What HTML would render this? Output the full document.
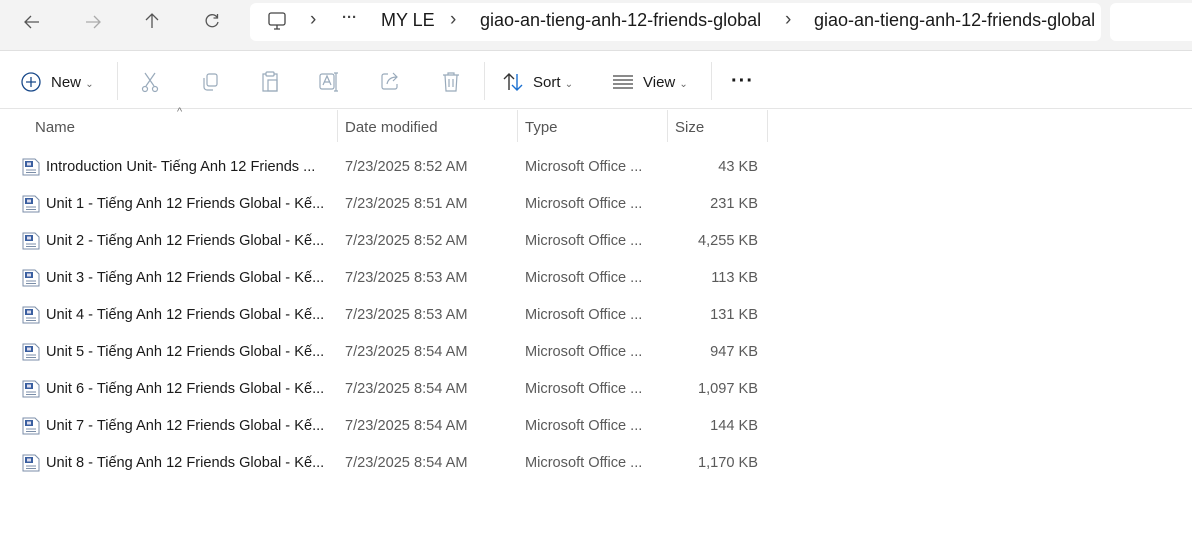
<!DOCTYPE html>
<html><head><meta charset="utf-8"><style>
*{margin:0;padding:0;box-sizing:border-box}
body{width:1192px;height:537px;background:#fff;font-family:"Liberation Sans",sans-serif;color:#1a1a1a;position:relative;overflow:hidden;font-size:15px}
.abs{position:absolute;white-space:nowrap}
.top{position:absolute;left:0;top:0;width:1192px;height:51px;background:#f3f3f3;border-bottom:1px solid #e0e0e0}
.addr{position:absolute;left:250px;top:3px;width:851px;height:38px;background:#fff;border-radius:6px}
.srch{position:absolute;left:1110px;top:3px;width:90px;height:38px;background:#fff;border-radius:6px}
.tb{position:absolute;left:0;top:108px;width:1192px;height:1px;background:#e5e5e5}
.sep{position:absolute;width:1px;background:#e5e5e5;top:62px;height:38px}
.hd{color:#555;font-size:15px}
.colsep{position:absolute;top:110px;width:1px;height:32px;background:#e5e5e5}
.row{font-size:14.6px}
.g{color:#5a5a5a}
.chev{color:#444;font-size:19px}
</style></head><body>
<div class="top"></div>
<div class="addr"></div><div class="srch"></div>
<svg class="abs" style="left:22px;top:12px" width="20" height="20" viewBox="0 0 20 20" fill="none" stroke="#555" stroke-width="1.3"><path d="M17 10H3M9 4L3 10l6 6"/></svg>
<svg class="abs" style="left:83px;top:12px" width="20" height="20" viewBox="0 0 20 20" fill="none" stroke="#aaa" stroke-width="1.3"><path d="M3 10h14M11 4l6 6-6 6"/></svg>
<svg class="abs" style="left:142px;top:11px" width="20" height="20" viewBox="0 0 20 20" fill="none" stroke="#555" stroke-width="1.3"><path d="M10 17V3M4 9l6-6 6 6"/></svg>
<svg class="abs" style="left:202px;top:11px" width="20" height="20" viewBox="0 0 20 20" fill="none" stroke="#555" stroke-width="1.3"><path d="M15.5 7A6 6 0 1 0 16 11M15.5 3v4h-4"/></svg>
<svg class="abs" style="left:266px;top:10px" width="22" height="22" viewBox="0 0 22 22" fill="none" stroke="#444" stroke-width="1.3"><rect x="3" y="3" width="16" height="12" rx="2"/><path d="M8 19h6M11 15v4"/></svg>
<div class="abs chev" style="left:310px;top:9px">›</div>
<div class="abs" style="left:342px;top:9px;color:#444;font-weight:bold">···</div>
<div class="abs" style="left:381px;top:10px;font-size:18px">MY LE</div>
<div class="abs chev" style="left:450px;top:9px">›</div>
<div class="abs" style="left:480px;top:10px;font-size:18px">giao-an-tieng-anh-12-friends-global</div>
<div class="abs chev" style="left:785px;top:9px">›</div>
<div class="abs" style="left:814px;top:10px;font-size:18px">giao-an-tieng-anh-12-friends-global</div>

<svg class="abs" style="left:20px;top:71px" width="22" height="22" viewBox="0 0 22 22" fill="none" stroke="#1a4a8a" stroke-width="1.3"><circle cx="11" cy="11" r="9"/><path d="M11 6v10M6 11h10"/></svg>
<div class="abs" style="left:51px;top:74px">New <span style="font-size:10px;color:#666">⌄</span></div>
<div class="sep" style="left:117px"></div>
<svg class="abs" style="left:140px;top:71px" width="20" height="22" viewBox="0 0 20 22" fill="none" stroke="#9ab" stroke-width="1.2"><path d="M5 2l9 13M15 2L6 15"/><circle cx="5" cy="18" r="2.5"/><circle cx="15" cy="18" r="2.5"/></svg>
<svg class="abs" style="left:199px;top:71px" width="22" height="22" viewBox="0 0 22 22" fill="none" stroke="#9ab" stroke-width="1.2"><rect x="8" y="3" width="10" height="12" rx="2"/><path d="M5 7v9a3 3 0 0 0 3 3h6"/></svg>
<svg class="abs" style="left:259px;top:70px" width="22" height="24" viewBox="0 0 22 24" fill="none" stroke="#9ab" stroke-width="1.2"><path d="M7 4H4v17h14V4h-3"/><rect x="7" y="2" width="8" height="4" rx="1"/><rect x="9" y="10" width="9" height="11"/></svg>
<svg class="abs" style="left:318px;top:70px" width="24" height="24" viewBox="0 0 24 24" fill="none" stroke="#9ab" stroke-width="1.2"><rect x="2" y="4" width="14" height="15" rx="2"/><path d="M5 15l4-9 4 9M6.5 12h5M18 3v18M16 3h4M16 21h4"/></svg>
<svg class="abs" style="left:379px;top:70px" width="22" height="22" viewBox="0 0 22 22" fill="none" stroke="#9ab" stroke-width="1.2"><path d="M9 4H5a2 2 0 0 0-2 2v11a2 2 0 0 0 2 2h11a2 2 0 0 0 2-2v-3"/><path d="M8 14c1-5 5-7 10-7M14 3l4 4-4 4"/></svg>
<svg class="abs" style="left:440px;top:70px" width="22" height="24" viewBox="0 0 22 24" fill="none" stroke="#9ab" stroke-width="1.2"><path d="M3 5h16M8 5V3h6v2M5 5l1 16h10l1-16M9 9v8M13 9v8"/></svg>
<div class="sep" style="left:484px"></div>
<svg class="abs" style="left:502px;top:71px" width="22" height="22" viewBox="0 0 22 22" fill="none" stroke-width="1.4"><path d="M7 19V3M2 8l5-5 5 5" stroke="#333"/><path d="M15 3v16M10 14l5 5 5-5" stroke="#1a6fd0"/></svg>
<div class="abs" style="left:533px;top:74px">Sort <span style="font-size:10px;color:#666">⌄</span></div>
<svg class="abs" style="left:612px;top:72px" width="22" height="20" viewBox="0 0 22 20" fill="none" stroke="#444" stroke-width="1.2"><path d="M1 4h20M1 8h20M1 12h20M1 16h20"/></svg>
<div class="abs" style="left:643px;top:74px">View <span style="font-size:10px;color:#666">⌄</span></div>
<div class="sep" style="left:711px"></div>
<div class="abs" style="left:731px;top:70px;font-size:20px;font-weight:bold;letter-spacing:1px">···</div>
<div class="tb"></div>

<div class="abs" style="left:177px;top:106px;color:#777;font-size:11px">^</div>
<div class="abs hd" style="left:35px;top:119px">Name</div>
<div class="colsep" style="left:337px"></div>
<div class="abs hd" style="left:345px;top:119px">Date modified</div>
<div class="colsep" style="left:517px"></div>
<div class="abs hd" style="left:525px;top:119px">Type</div>
<div class="colsep" style="left:667px"></div>
<div class="abs hd" style="left:675px;top:119px">Size</div>
<div class="colsep" style="left:767px"></div>

<div id="rows"></div>
<script>
var d=[["Introduction Unit- Tiếng Anh 12 Friends ...","7/23/2025 8:52 AM","43 KB"],
["Unit 1 - Tiếng Anh 12 Friends Global - Kế...","7/23/2025 8:51 AM","231 KB"],
["Unit 2 - Tiếng Anh 12 Friends Global - Kế...","7/23/2025 8:52 AM","4,255 KB"],
["Unit 3 - Tiếng Anh 12 Friends Global - Kế...","7/23/2025 8:53 AM","113 KB"],
["Unit 4 - Tiếng Anh 12 Friends Global - Kế...","7/23/2025 8:53 AM","131 KB"],
["Unit 5 - Tiếng Anh 12 Friends Global - Kế...","7/23/2025 8:54 AM","947 KB"],
["Unit 6 - Tiếng Anh 12 Friends Global - Kế...","7/23/2025 8:54 AM","1,097 KB"],
["Unit 7 - Tiếng Anh 12 Friends Global - Kế...","7/23/2025 8:54 AM","144 KB"],
["Unit 8 - Tiếng Anh 12 Friends Global - Kế...","7/23/2025 8:54 AM","1,170 KB"]];
var h="";
d.forEach(function(r,i){var y=159+i*37;
h+='<svg class="abs" style="left:21px;top:'+(y-2)+'px" width="20" height="20" viewBox="0 0 20 20"><path d="M2 2h12l4 4v12H2z" fill="#fff" stroke="#7b8ea8"/><rect x="4" y="4" width="8" height="6" fill="#3a5fa0"/><rect x="6" y="5.5" width="4" height="3" fill="#dde"/><path d="M5 13h10M5 15.5h10" stroke="#7b8ea8"/></svg>';
h+='<div class="abs row" style="left:46px;top:'+y+'px">'+r[0]+'</div>';
h+='<div class="abs row g" style="left:345px;top:'+y+'px">'+r[1]+'</div>';
h+='<div class="abs row g" style="left:525px;top:'+y+'px">Microsoft Office ...</div>';
h+='<div class="abs row g" style="right:434px;top:'+y+'px">'+r[2]+'</div>';});
document.getElementById("rows").innerHTML=h;
</script>
</body></html>
